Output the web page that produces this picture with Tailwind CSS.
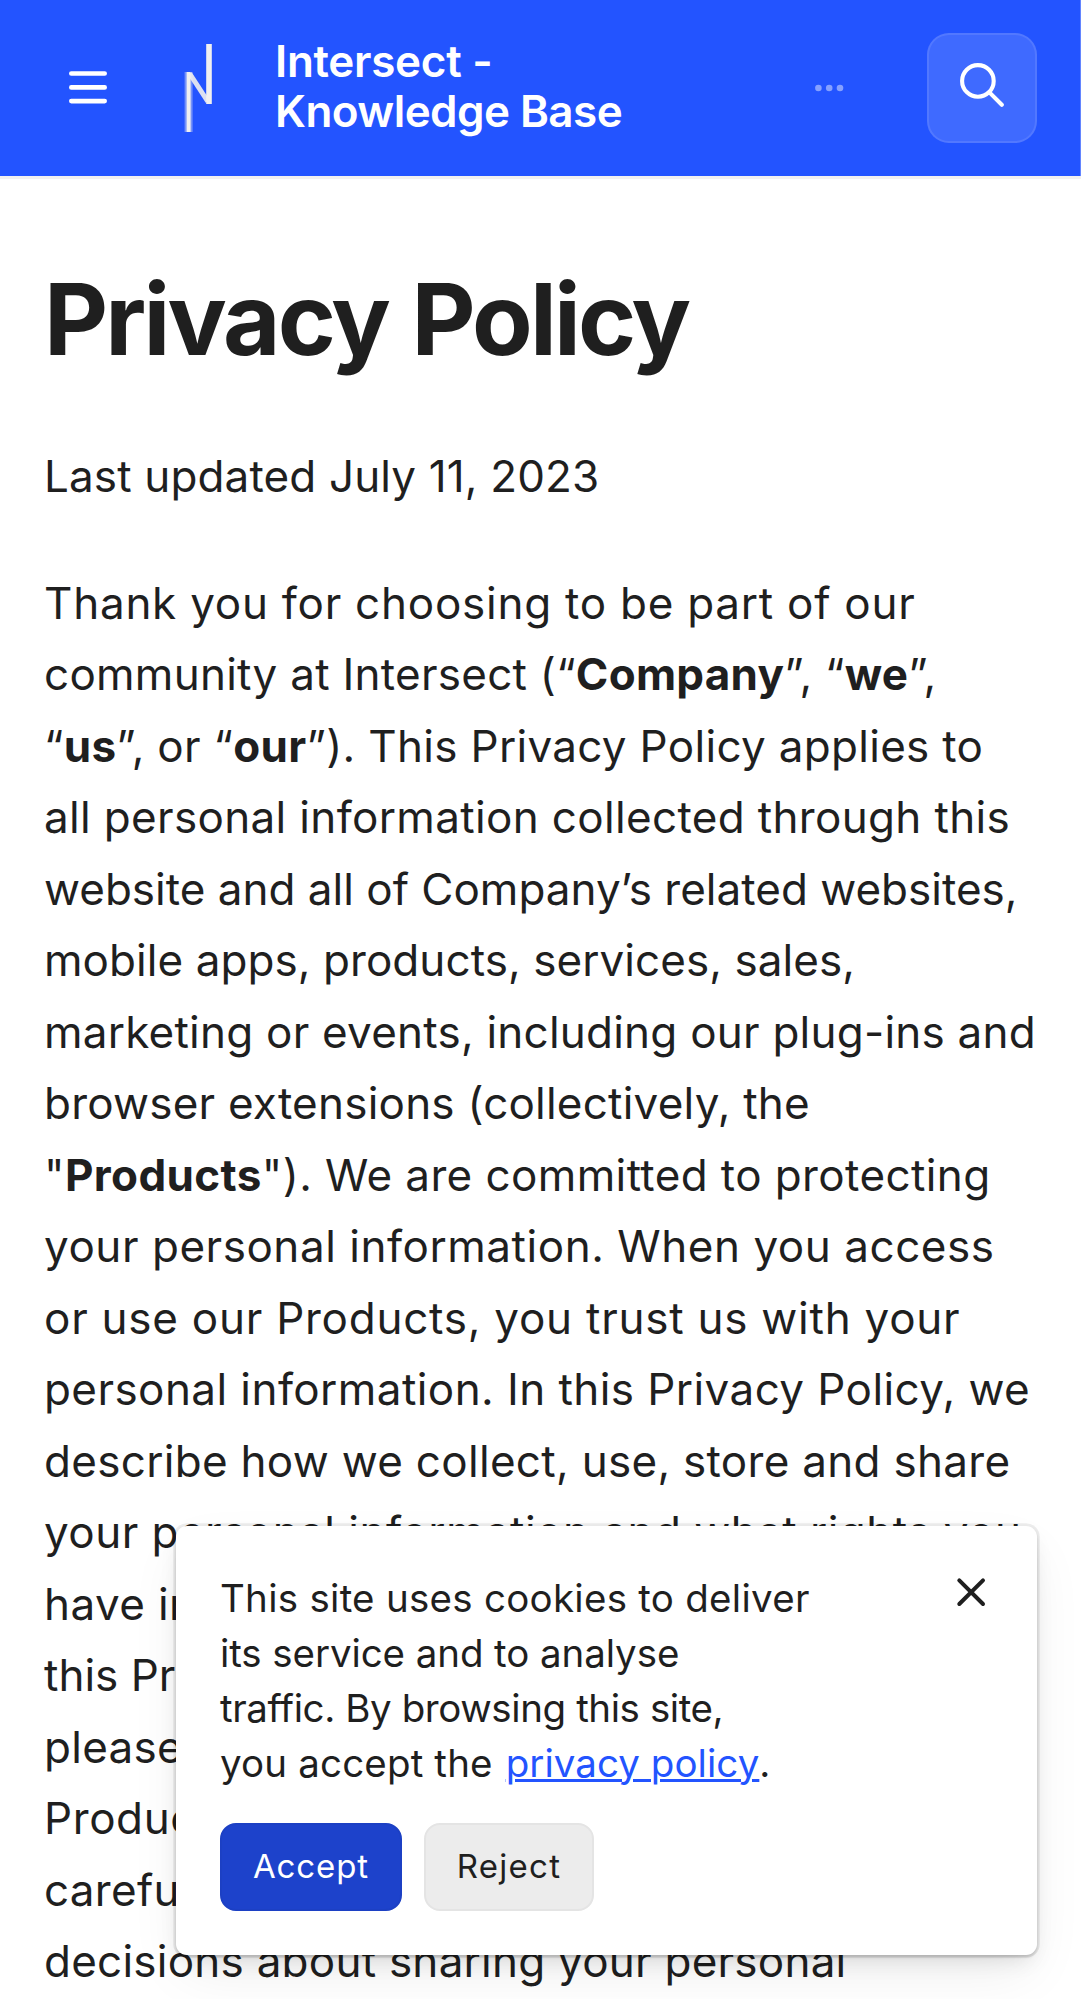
<!DOCTYPE html>
<html lang="en">
<head>
<meta charset="utf-8">
<title>Privacy Policy | Intersect - Knowledge Base</title>
<script src="https://cdn.jsdelivr.net/npm/@tailwindcss/browser@4"></script>
</head>
<body class="bg-white">
<div class="relative h-[1999px] w-[1081px] overflow-hidden bg-white font-['Inter',sans-serif] text-[#1f1f1f]">
  <header class="flex h-44 items-center border-r border-[#6385ff] bg-[#2354ff] px-11 pr-[43px] text-white shadow-[0_3px_0_#f1f1f1]">
    <button class="flex size-[88px] shrink-0 items-center justify-center" aria-label="Open menu">
      <svg class="size-11" viewBox="0 0 44 44" fill="none" stroke="currentColor" stroke-width="4.6" stroke-linecap="round"><path d="M5.3 7.5H38.7M5.3 21.4H38.7M5.3 35.1H38.7"/></svg>
    </button>
    <svg class="ml-[22px] size-[88px] shrink-0" viewBox="0 0 88 88" fill="none" stroke="#f0f0f0"><path d="M34.6 88V28" stroke-width="8" opacity=".4"/><path d="M34.6 88V28" stroke-width="4"/><path d="M35.6 29.5 53.8 57.5" stroke-width="5" opacity=".9"/><path d="M55 0V60" stroke-width="5.6"/></svg>
    <div class="ml-[33px] w-[440px] pb-1 text-[44px] leading-[50px] font-semibold whitespace-nowrap">
      <span class="block tracking-[-0.29px]">Intersect -</span>
      <span class="block tracking-[-0.56px]">Knowledge Base</span>
    </div>
    <svg class="ml-[91px] h-11 w-12 shrink-0" viewBox="0 0 48 44" fill="#fff" fill-opacity=".45"><circle cx="12.4" cy="22" r="3.3"/><circle cx="23.2" cy="22" r="3.3"/><circle cx="34" cy="22" r="3.3"/></svg>
    <button class="ml-auto flex size-[110px] shrink-0 items-center justify-center rounded-[22px] border-[2.75px] border-white/10 bg-white/13" aria-label="Search">
      <svg class="mb-[6px] size-11" viewBox="0 0 44 44" fill="none" stroke="currentColor" stroke-width="4.1" stroke-linecap="round"><circle cx="17.9" cy="17.9" r="15.8"/><path d="M29.4 29.4 41.8 41.8"/></svg>
    </button>
  </header>
  <main class="px-11 pt-[88px]">
    <h1 class="text-[99px] leading-[110px] font-bold tracking-[-2.85px] [word-spacing:3px]">Privacy Policy</h1>
    <div class="mt-[67px] flex flex-col gap-[55px] text-[44px] leading-[71.5px] whitespace-nowrap">
      <p class="tracking-[0.14px]">Last updated July 11, 2023</p>
      <p>
        <span class="block tracking-[0.75px]">Thank you for choosing to be part of our</span>
        <span class="block tracking-[0.26px]">community at Intersect (“<strong>Company</strong>”, “<strong>we</strong>”,</span>
        <span class="block tracking-[0.31px]">“<strong>us</strong>”, or “<strong>our</strong>”). This Privacy Policy applies to</span>
        <span class="block tracking-[0.34px]">all personal information collected through this</span>
        <span class="block tracking-[0.01px]">website and all of Company’s related websites,</span>
        <span class="block tracking-[0.07px]">mobile apps, products, services, sales,</span>
        <span class="block tracking-[0.23px]">marketing or events, including our plug-ins and</span>
        <span class="block tracking-[0.22px]">browser extensions (collectively, the</span>
        <span class="block tracking-[0.39px]">"<strong>Products</strong>"). We are committed to protecting</span>
        <span class="block tracking-[0.54px]">your personal information. When you access</span>
        <span class="block tracking-[0.75px]">or use our Products, you trust us with your</span>
        <span class="block tracking-[0.43px]">personal information. In this Privacy Policy, we</span>
        <span class="block tracking-[0.3px]">describe how we collect, use, store and share</span>
        <span class="block tracking-[0.47px]">your personal information and what rights you</span>
        <span class="block tracking-[0.4px]">have in relation to it. If there are terms in</span>
        <span class="block">this Privacy Policy you do not agree with,</span>
        <span class="block tracking-[0.3px]">please discontinue use of our</span>
        <span class="block tracking-[0.6px]">Products. Please read this policy</span>
        <span class="block tracking-[0.3px]">carefully as it will help you make</span>
        <span class="block tracking-[0.24px]">decisions about sharing your personal</span>
      </p>
    </div>
  </main>
  <div class="absolute right-11 bottom-11 h-[429px] w-[861px] rounded-[11px] bg-white px-11 pt-[45px] shadow-[0_0_0_2.75px_rgba(0,0,0,0.07),0_2px_3px_rgba(0,0,0,0.15),0_10px_22px_-6px_rgba(0,0,0,0.12),0_22px_55px_-8px_rgba(0,0,0,0.08)]" role="dialog">
    <p class="text-[38.5px] leading-[55px] whitespace-nowrap">
      <span class="block tracking-[0.27px]">This site uses cookies to deliver</span>
      <span class="block tracking-[-0.09px]">its service and to analyse</span>
      <span class="block tracking-[-0.41px]">traffic. By browsing this site,</span>
      <span class="block tracking-[0.16px]">you accept the <a class="ml-0.5 tracking-[0.05px] text-[#2354ff] underline decoration-[2.75px]">privacy policy</a>.</span>
    </p>
    <button class="absolute top-11 right-11 flex size-11 items-center justify-center" aria-label="Close">
      <svg class="size-11" viewBox="0 0 44 44" fill="none" stroke="currentColor" stroke-width="4" stroke-linecap="round"><path d="M10.3 10.3 34 34M34 10.3 10.3 34"/></svg>
    </button>
    <div class="mt-8 flex gap-[22px] text-[33px]">
      <button class="h-[88px] w-[182px] rounded-2xl border-2 border-[#1c40c4] bg-[#1d42cb] tracking-[0.9px] text-white">Accept</button>
      <button class="h-[88px] w-[170px] rounded-2xl border-2 border-[#e4e4e4] bg-[#ececec] tracking-[1.3px]">Reject</button>
    </div>
  </div>
</div>
</body>
</html>
